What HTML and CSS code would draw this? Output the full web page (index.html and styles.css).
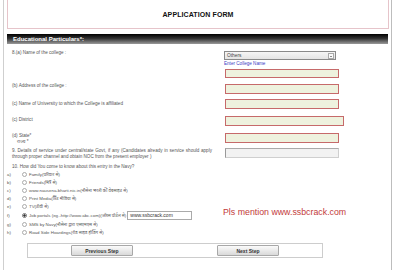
FILE: index.html
```html
<!DOCTYPE html>
<html>
<head>
    <title>Application Form</title>
    <link rel="stylesheet" href="styles.css">
</head>
<body>
    <div class="page">
        <div class="head">
            <h1>APPLICATION FORM</h1>
        </div>
        <div class="bar">Educational Particulars*:</div>

        <div class="row r1">
            <div class="lbl">8.(a) Name of the college :</div>
            <div class="fld">
                <div class="select">Others<span class="arrow"></span></div>
                <div class="hint">Enter College Name</div>
                <div class="input"></div>
            </div>
        </div>
        <div class="row r2">
            <div class="lbl">(b) Address of the college :</div>
            <div class="fld"><div class="input"></div></div>
        </div>
        <div class="row r3">
            <div class="lbl">(c) Name of University to which the College is affiliated</div>
            <div class="fld"><div class="input"></div></div>
        </div>
        <div class="row r4">
            <div class="lbl">(c) District</div>
            <div class="fld"><div class="input wide"></div></div>
        </div>
        <div class="row r5">
            <div class="lbl">(d) State*<br>&nbsp;&nbsp;&nbsp;&nbsp;राज्य *</div>
            <div class="fld"><div class="input"></div></div>
        </div>
        <div class="row r6">
            <div class="lbl just">9. Details of service under central/state Govt, if any (Candidates already in service should apply through proper channel and obtain NOC from the present employer )</div>
            <div class="fld"><div class="input off"></div></div>
        </div>

        <div class="question">10. How did You come to know about this entry in the Navy?</div>
        <div class="how">
            <ul class="opts">
                <li><span class="key">a)</span><span class="radio"></span>Family(परिवार से)</li>
                <li><span class="key">b)</span><span class="radio"></span>Friends(मित्र से)</li>
                <li><span class="key">c)</span><span class="radio"></span>www.nausena-bharti.nic.in(नौसेना भरती की वेबसाइट से)</li>
                <li><span class="key">d)</span><span class="radio"></span>Print Media(प्रिंट मीडिया से)</li>
                <li><span class="key">e)</span><span class="radio"></span>TV(टीवी से)</li>
                <li class="tall"><span class="key">f)</span><span class="radio on"></span>Job portals (eg.-http://www.abc.com)(जॉब्स पोर्टल से)<span class="portal">www.ssbcrack.com</span></li>
                <li><span class="key">g)</span><span class="radio"></span>SMS by Navy(नौसेना द्वारा एसएमएस से)</li>
                <li><span class="key">h)</span><span class="radio"></span>Road Side Hoardings(रोड साइड होर्डिंग से)</li>
            </ul>
            <div class="note">Pls mention www.ssbcrack.com</div>
        </div>

        <div class="steps">
            <button class="btn">Previous Step</button>
            <button class="btn">Next Step</button>
        </div>
    </div>
</body>
</html>
```

FILE: styles.css
```css
body {
    margin: 0;
    padding: 0;
    background-color: #fff;
    font-family: 'Liberation Sans', 'Noto Sans', 'Noto Sans Devanagari', sans-serif;
    color: #555;
}

.page {
    margin-left: 3px;
    width: 384px;
    height: 270px;
    padding-left: 3px;
    border-left: 1px solid #cfcfcf;
    border-right: 1px solid #bdbdbd;
    overflow: hidden;
}

.head {
    width: 380px;
    height: 28px;
    border: 1px solid #e6c4ca;
    border-top: none;
    display: flex;
    align-items: center;
    justify-content: center;
}

h1 {
    margin: 0;
    font-size: 7px;
    font-weight: bold;
    color: #111;
    letter-spacing: 0.1px;
}

.bar {
    margin-top: 5px;
    width: 375px;
    height: 10px;
    padding-left: 6px;
    background: linear-gradient(#000 0%, #333 45%, #9a9a9a 100%);
    color: #fff;
    font-weight: bold;
    font-size: 6px;
    line-height: 10px;
}

/* form rows: label column + field column */
.row {
    display: flex;
    align-items: flex-start;
}

.lbl {
    width: 200px;
    padding-left: 5px;
    padding-right: 12px;
    font-size: 4.6px;
    line-height: 6px;
    color: #555;
}

.just {
    text-align: justify;
}

.fld {
    width: 125px;
}

.r1 { height: 36px; }
.r1 .lbl { padding-top: 6px; }
.r1 .fld { padding-top: 7px; }

.r2 { height: 17px; }
.r2 .lbl { padding-top: 3px; }
.r2 .fld { padding-top: 4px; }

.r3 { height: 16px; }
.r3 .lbl { padding-top: 4px; }
.r3 .fld { padding-top: 2px; }

.r4 { height: 16px; }
.r4 .lbl { padding-top: 4px; }
.r4 .fld { padding-top: 3px; }

.r5 { height: 16px; }
.r5 .lbl { padding-top: 4px; }
.r5 .fld { padding-top: 4px; }

.r6 { height: 17px; }
.r6 .lbl { padding-top: 3px; }
.r6 .fld { padding-top: 3px; }

.select {
    position: relative;
    width: 108px;
    height: 7px;
    border: 1px solid #8a8a8a;
    background: linear-gradient(#f6f6f6, #e4e4e4);
    font-size: 4.8px;
    line-height: 7px;
    padding-left: 2px;
    color: #444;
}

.arrow {
    position: absolute;
    right: 1px;
    top: 1px;
    width: 4px;
    height: 4px;
    border: 1px solid #aaa;
    background: #fafafa;
}

.arrow:after {
    content: "";
    position: absolute;
    left: 1px;
    top: 1.5px;
    border-left: 1px solid transparent;
    border-right: 1px solid transparent;
    border-top: 1.5px solid #222;
}

.hint {
    height: 7px;
    font-size: 4.6px;
    line-height: 8px;
    color: #3b3bc4;
}

.input {
    margin-left: 1px;
    margin-top: 2px;
    width: 112px;
    height: 7px;
    border: 1px solid #c66a6a;
    background-color: #eef2de;
}

.r2 .input, .r3 .input, .r4 .input, .r5 .input, .r6 .input {
    margin-top: 0;
    height: 8px;
}

.input.wide {
    width: 117px;
}

.input.off {
    border-color: #cfcfcf;
    border-left-color: #999;
    border-top-color: #aaa;
    background-color: #f2f2f2;
}

.question {
    height: 6px;
    padding-top: 2px;
    padding-left: 5px;
    font-size: 4.6px;
    line-height: 6px;
}

.how {
    display: flex;
}

.opts {
    list-style: none;
    margin: 0;
    padding: 0;
    width: 216px;
}

.opts li {
    display: flex;
    align-items: center;
    height: 8px;
    font-size: 4.4px;
    color: #555;
}

.opts li.tall {
    height: 10px;
}

.key {
    width: 15px;
}

.radio {
    width: 3px;
    height: 3px;
    border: 1px solid #aaa;
    border-radius: 50%;
    margin-right: 2px;
    background: #fff;
}

.radio.on {
    background: radial-gradient(circle, #333 45%, #fff 55%);
    border-color: #777;
}

.portal {
    margin-left: 1px;
    width: 61px;
    height: 7px;
    padding-left: 2px;
    border: 1px solid #aaa;
    font-size: 5px;
    line-height: 7px;
    color: #333;
}

.note {
    margin-top: 37px;
    margin-left: 0;
    font-size: 8.8px;
    color: #c23a3a;
}

.steps {
    margin-top: 7px;
    margin-left: 20px;
    width: 294px;
    height: 13px;
    border: 1px solid #cdcdcd;
    display: flex;
    align-items: center;
    justify-content: center;
    gap: 84px;
}

.btn {
    width: 62px;
    height: 11px;
    padding: 0;
    border: 1px solid #a8a8a8;
    border-radius: 1px;
    background: linear-gradient(#fbfbfb, #d9d9d9);
    font-family: 'Liberation Sans', sans-serif;
    font-size: 5px;
    font-weight: bold;
    color: #333;
}
```
